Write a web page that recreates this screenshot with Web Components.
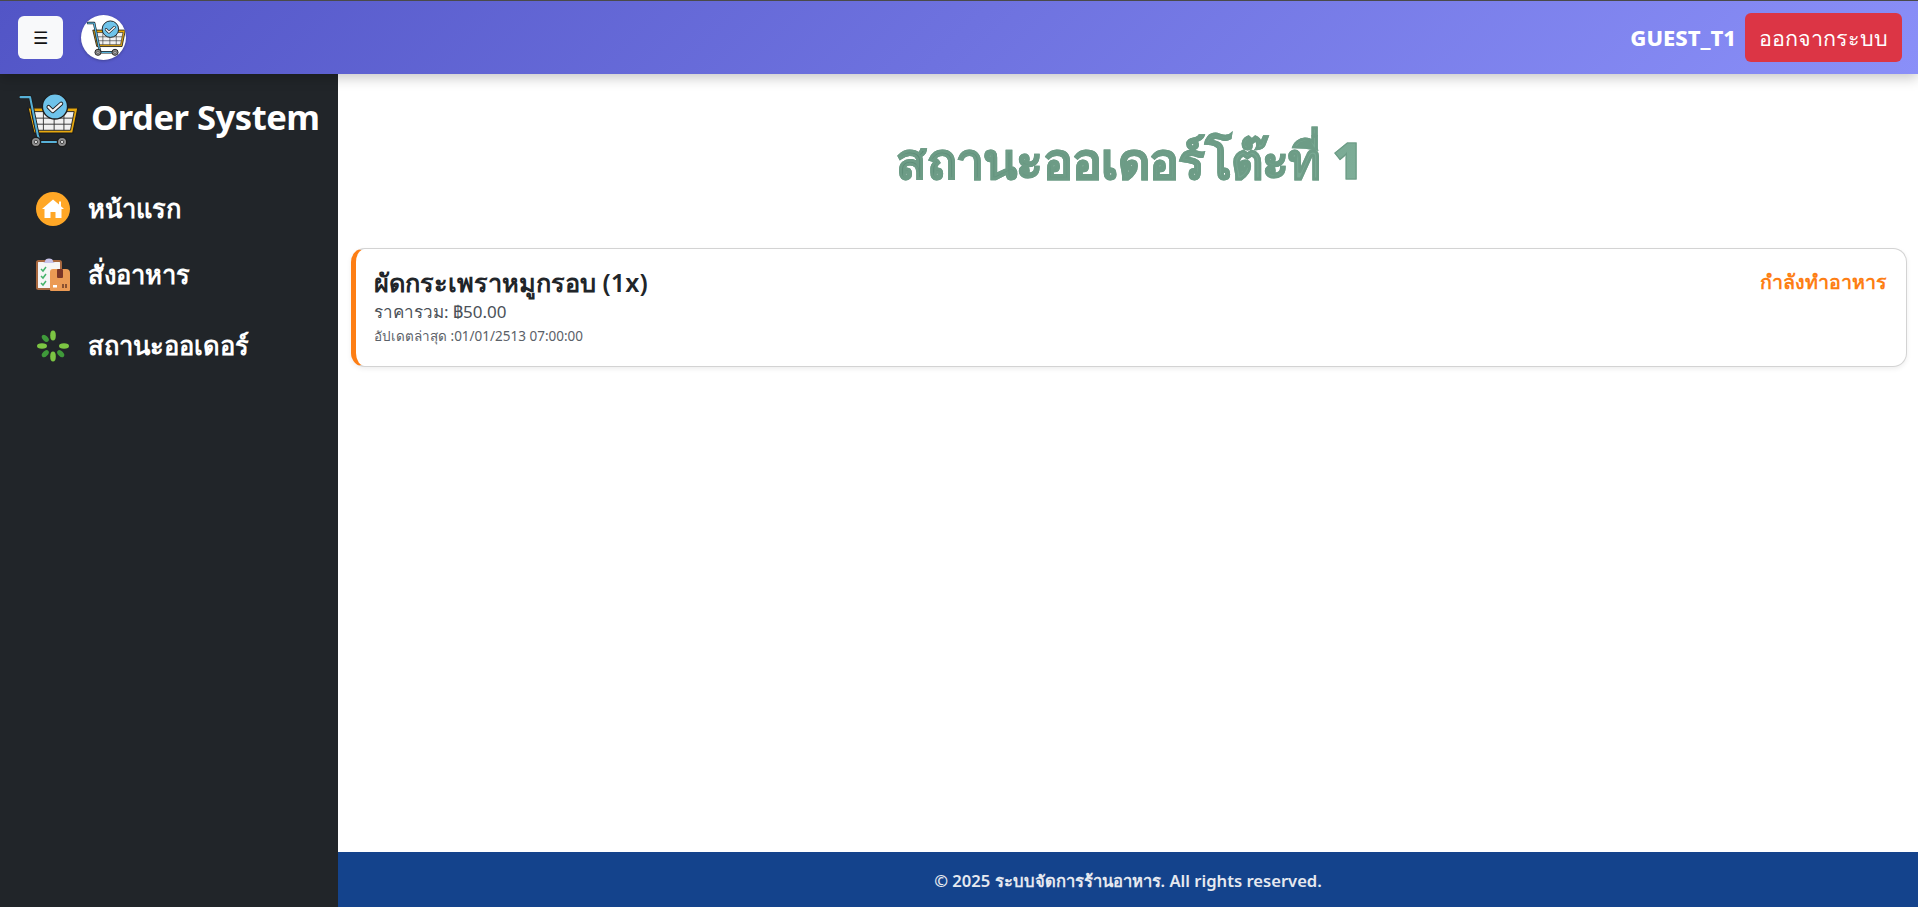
<!doctype html>
<html><head><meta charset="utf-8"><title>Order System</title>
<style>
html,body{margin:0;height:100%;background:#fff}
body{font-family:"Noto Sans","Open Sans",sans-serif;overflow:hidden}
</style></head><body>
<template id="cart-t"><style>:host{display:inline-block;line-height:0}svg{width:100%;height:100%;display:block}</style>
<svg viewBox="0 0 64 60">
<path d="M9.500 17H63L57.500 44H16Z" fill="#e8a90e" stroke="#1d1d1d" stroke-width="1.400" stroke-linejoin="round"/>
<path d="M13 21H59L55 41H17.500Z" fill="#f1f1f1" stroke="#222" stroke-width="1"/>
<path d="M14 28H57.500M15.500 34.500H56M26 21V41M37.500 21V41M48 21V41" stroke="#333" stroke-width="1" fill="none"/>
<path d="M1.500 5.500H11.700L20 46L22 53.500H42" fill="none" stroke="#1d1d1d" stroke-width="4" stroke-linecap="round" stroke-linejoin="round"/>
<path d="M1.500 5.500H11.700L20 46L22 53.500H42" fill="none" stroke="#57b1d8" stroke-width="2.200" stroke-linecap="round" stroke-linejoin="round"/>
<circle cx="18" cy="53.500" r="5" fill="#8f8f8f" stroke="#1d1d1d" stroke-width="1.500"/><circle cx="18" cy="53.500" r="1.800" fill="#ddd" stroke="#222" stroke-width=".8"/>
<circle cx="46" cy="53.500" r="5" fill="#8f8f8f" stroke="#1d1d1d" stroke-width="1.500"/><circle cx="46" cy="53.500" r="1.800" fill="#ddd" stroke="#222" stroke-width=".8"/>
<circle cx="38.400" cy="15.500" r="13.500" fill="#6ec3ea" stroke="#1d1d1d" stroke-width="1.500"/>
<path d="M31.500 16L36 20.500L45 12.500" fill="none" stroke="#1d1d1d" stroke-width="4.400" stroke-linecap="round" stroke-linejoin="round"/>
<path d="M31.500 16L36 20.500L45 12.500" fill="none" stroke="#f4f4f4" stroke-width="2.400" stroke-linecap="round" stroke-linejoin="round"/>
</svg></template>

<template id="bar-t"><style>
:host{display:flex;align-items:center;justify-content:space-between;height:73px;border-top:1px solid #4a4a4a;background:linear-gradient(135deg,#5255c6 0%,#8a8ff8 100%);box-shadow:0 4px 12px rgba(0,0,0,.22);position:relative;z-index:2;padding:0 16px 0 18px;flex:none}
.l,.r{display:flex;align-items:center}
.menu{width:45px;height:43px;border-radius:6px;background:#f8f9fa;border:0;padding:0;display:flex;align-items:center;justify-content:center;font:17px "DejaVu Sans",sans-serif;color:#111}
.logo{width:45px;height:45px;border-radius:50%;background:#fff;margin-left:18px;display:flex;align-items:center;justify-content:center;box-shadow:0 1px 3px rgba(0,0,0,.25);overflow:hidden}
order-cart{width:39px;height:38px;margin-left:5px;flex:none}
.u{color:#fff;font:800 22px "Noto Sans",sans-serif;margin:0 9px 2px 0}
.out{background:#dc3545;color:#fff;border:0;border-radius:6px;height:49px;width:157px;font:500 21.500px "Noto Sans",sans-serif;padding:0}
</style><div class="l"><button class="menu">☰</button><div class="logo"><order-cart></order-cart></div></div>
<div class="r"><span class="u">GUEST_T1</span><button class="out">ออกจากระบบ</button></div></template>

<template id="side-t"><style>
:host{display:flex;flex-direction:column;width:338px;background:#212529;flex:none;color:#fff}
.b{display:flex;align-items:center;padding:18px 0 0 19px;height:56px;margin-bottom:27px}
order-cart{width:60px;height:56px}
h1{margin:0 0 7px 12px;font:700 34.600px "Noto Sans",sans-serif;white-space:nowrap;letter-spacing:-.5px}
</style><div class="b"><order-cart></order-cart><h1>Order System</h1></div><slot></slot></template>

<template id="nav-t"><style>
:host{display:flex;align-items:center;height:66px;padding-left:36px;gap:18px;color:#fff;font:600 25.500px "Noto Sans",sans-serif}
::slotted(svg){width:34px;height:34px;flex:none}
</style><slot name="i"></slot><span><slot></slot></span></template>

<template id="card-t"><style>
:host{display:flex;justify-content:space-between;box-sizing:border-box;height:119px;padding:18px 19px 0 18px;border:1px solid #d3d3d3;border-left:5px solid #fd7e14;border-radius:14px;box-shadow:0 2px 5px rgba(0,0,0,.07);background:#fff;color:#212529}
.n{font:600 25.300px/30px "Noto Sans",sans-serif}
.p{font:400 17px/30px "Noto Sans",sans-serif;color:#4b5158}
.t{font:400 13.500px/19px "Noto Sans",sans-serif;color:#5b6168}
.s{color:#fd7e14;font:800 19.600px/28px "Noto Sans",sans-serif;padding-top:1px}
</style><div><div class="n"><slot name="name"></slot></div><div class="p"><slot name="price"></slot></div><div class="t"><slot name="time"></slot></div></div><div class="s"><slot name="status"></slot></div></template>

<template id="main-t"><style>
:host{display:flex;flex-direction:column;flex:1;min-width:0;background:#fff}
.c{flex:1;padding:0 11px 0 13px}
h2{margin:0;height:174px;display:flex;align-items:center;justify-content:center;font:900 50px "Noto Sans",sans-serif;letter-spacing:-.7px}
h2 span{background:linear-gradient(135deg,#5a8a75,#80b09a);-webkit-background-clip:text;background-clip:text;color:transparent;-webkit-text-stroke:1.200px #6d9c86}
footer{height:55px;background:#14438c;color:#e6e9f0;display:flex;align-items:center;justify-content:center;font:600 16.600px "Noto Sans",sans-serif;flex:none;padding-top:3px;box-sizing:border-box}
</style><div class="c"><h2><span><slot name="title"></slot></span></h2><slot></slot></div><footer><slot name="foot"></slot></footer></template>

<template id="app-t"><style>:host{display:flex;flex-direction:column;height:907px;overflow:hidden}.row{display:flex;flex:1;min-height:0}</style><slot name="top"></slot><div class="row"><slot></slot></div></template>

<order-app>
<order-bar slot="top"></order-bar>
<order-side>
<order-nav style="height:67px"><svg slot="i" viewBox="0 0 34 34"><circle cx="17" cy="17" r="17" fill="#ffa726"/><path d="M17 7.500L23 12.600V9.500H25V14.300L28 17H25.500V26H19.500V20H14.500V26H8.500V17H6Z" fill="#fff"/></svg>หน้าแรก</order-nav>
<order-nav><svg slot="i" viewBox="0 0 34 34"><rect x="1" y="3" width="24" height="28" rx="1.500" fill="#f6f6f6" stroke="#a8683f" stroke-width="2"/><path d="M9 3.500Q9 .5 13 .5T17 3.500L19 5H7Z" fill="#c9c5ea"/><path d="M5 11l2 2 3-4M5 18l2 2 3-4M5 25l2 2 3-4" fill="none" stroke="#45b36b" stroke-width="1.500"/><path d="M14 14Q14 11 17 11H30Q34 11 34 15V32Q34 33 33 33H15Q14 33 14 32Z" fill="#eb9a54"/><rect x="21" y="11" width="6" height="9" fill="#7a3527" rx="1"/><rect x="17" y="27" width="4" height="2.500" fill="#fff"/><path d="M27 26v4M30 26v4" stroke="#6b3a26" stroke-width="1.500"/></svg>สั่งอาหาร</order-nav>
<order-nav style="height:76px"><svg slot="i" viewBox="0 0 34 34"><g fill="#7cc543"><ellipse cx="17" cy="6.500" rx="2.800" ry="5"/><ellipse cx="17" cy="27.500" rx="2.800" ry="5"/><ellipse cx="6" cy="17" rx="5" ry="2.800"/><ellipse cx="28" cy="17" rx="5" ry="2.800"/></g><g fill="#3f9a3a"><ellipse cx="9.300" cy="9.300" rx="2.600" ry="4.200" transform="rotate(-45 9.300 9.300)"/><ellipse cx="9.300" cy="24.700" rx="2.600" ry="4.200" transform="rotate(45 9.300 24.700)"/><ellipse cx="24.700" cy="24.700" rx="2.600" ry="4.200" transform="rotate(-45 24.700 24.700)"/></g></svg>สถานะออเดอร์</order-nav>
</order-side>
<order-main>
<span slot="title">สถานะออเดอร์โต๊ะที่ 1</span>
<order-card>
<span slot="name">ผัดกระเพราหมูกรอบ (1x)</span>
<span slot="price">ราคารวม: ฿50.00</span>
<span slot="time">อัปเดตล่าสุด :01/01/2513 07:00:00</span>
<span slot="status">กำลังทำอาหาร</span>
</order-card>
<span slot="foot">© 2025 ระบบจัดการร้านอาหาร. All rights reserved.</span>
</order-main>
</order-app>
<script>
const def=(n,t)=>customElements.define(n,class extends HTMLElement{constructor(){super();this.attachShadow({mode:"open"}).append(document.getElementById(t).content.cloneNode(true))}});
[["order-cart","cart-t"],["order-bar","bar-t"],["order-side","side-t"],["order-nav","nav-t"],["order-card","card-t"],["order-main","main-t"],["order-app","app-t"]].forEach(a=>def(...a));
</script>
</body></html>
